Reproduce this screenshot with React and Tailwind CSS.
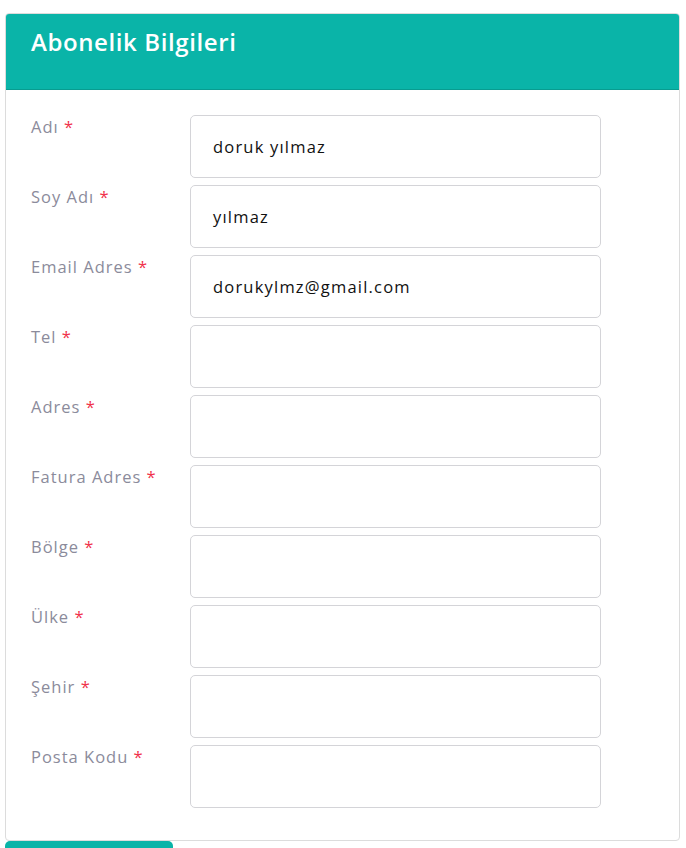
import React from "react";

const fields = [
  { label: "Adı", value: "doruk yılmaz" },
  { label: "Soy Adı", value: "yılmaz" },
  { label: "Email Adres", value: "dorukylmz@gmail.com" },
  { label: "Tel", value: "" },
  { label: "Adres", value: "" },
  { label: "Fatura Adres", value: "" },
  { label: "Bölge", value: "" },
  { label: "Ülke", value: "" },
  { label: "Şehir", value: "" },
  { label: "Posta Kodu", value: "" },
];

export default function App() {
  return (
    <div
      className="min-h-[848px] bg-white pt-[13px] pl-[5px] pr-[6px]"
      style={{ fontFamily: '"Open Sans", "Noto Sans", sans-serif' }}
    >
      <div className="w-[675px] rounded-[4px] border border-[#dcdcdc] overflow-hidden">
        <div className="h-[76px] bg-[#0ab4a8] border-b border-[#089c90] pl-[25px] pt-[16px]">
          <h1 className="text-[24px] font-semibold text-white leading-none tracking-[0.6px]">
            Abonelik Bilgileri
          </h1>
        </div>
        <div className="pt-[25px] pb-[32px] pl-[25px] flex flex-col gap-[7px]">
          {fields.map((f) => (
            <div key={f.label} className="flex">
              <label className="w-[159px] text-[16.5px] leading-[24px] tracking-[1px] text-[#8b8b9b]">
                {f.label} <span className="text-[#f0324a]">*</span>
              </label>
              <div className="w-[411px] h-[63px] rounded-[5px] border border-[#d4d4d8] flex items-center pl-[22px] text-[16.5px] leading-[24px] tracking-[1.2px] text-[#111]">
                {f.value}
              </div>
            </div>
          ))}
        </div>
      </div>
      <div className="w-[168px] h-[20px] rounded-t-[5px] bg-[#0ab4a8]" />
    </div>
  );
}
